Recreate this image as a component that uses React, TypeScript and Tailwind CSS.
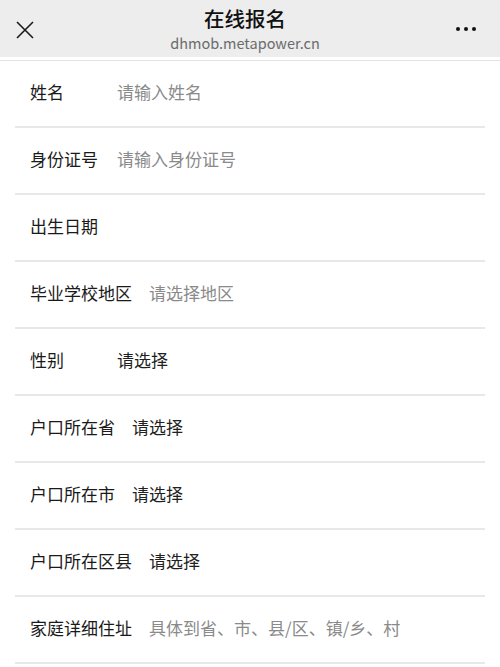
const FONT = '"Noto Sans CJK SC", "Noto Sans", sans-serif';

type Field = { label: string; value?: string; placeholder?: boolean };

const fields: Field[] = [
  { label: "姓名", value: "请输入姓名", placeholder: true },
  { label: "身份证号", value: "请输入身份证号", placeholder: true },
  { label: "出生日期" },
  { label: "毕业学校地区", value: "请选择地区", placeholder: true },
  { label: "性别", value: "请选择" },
  { label: "户口所在省", value: "请选择" },
  { label: "户口所在市", value: "请选择" },
  { label: "户口所在区县", value: "请选择" },
  { label: "家庭详细住址", value: "具体到省、市、县/区、镇/乡、村", placeholder: true },
];

function Row({ label, value, placeholder }: Field) {
  return (
    <div className="mx-[15px] h-[67px] flex items-center border-b-2 border-[#e8e8e8] pl-[15px] pb-[3px]">
      <span className="min-w-[70px] mr-[17px] text-[17px] text-[#1a1a1a] whitespace-nowrap">{label}</span>
      {value && (
        <span className={"text-[17px] whitespace-nowrap " + (placeholder ? "text-[#8a8a8a]" : "text-[#1f1f1f]")}>
          {value}
        </span>
      )}
    </div>
  );
}

export default function App() {
  return (
    <div className="w-[500px] h-[667px] overflow-hidden bg-white" style={{ fontFamily: FONT }}>
      <header className="h-[57px] bg-[#ededed] flex items-center justify-between px-[16px]">
        <svg width="18" height="18" viewBox="0 0 18 18" className="mt-[2px]">
          <path d="M1 1L17 17M17 1L1 17" stroke="#1a1a1a" strokeWidth="1.6" fill="none" />
        </svg>
        <div className="flex flex-col items-center leading-none">
          <span className="text-[20.5px] text-[#111] font-medium leading-[24px]">在线报名</span>
          <span className="text-[14.5px] text-[#6b6b6b] mt-[4px] leading-[17px]">dhmob.metapower.cn</span>
        </div>
        <div className="flex items-center gap-[4px] mr-[8px] mt-[1px]">
          <span className="w-[4px] h-[4px] rounded-full bg-[#111]" />
          <span className="w-[4px] h-[4px] rounded-full bg-[#111]" />
          <span className="w-[4px] h-[4px] rounded-full bg-[#111]" />
        </div>
      </header>
      <div className="h-[3px]" />
      <div className="border-t border-[#e3e3e3]">
        {fields.map((f) => (
          <Row key={f.label} {...f} />
        ))}
      </div>
    </div>
  );
}
